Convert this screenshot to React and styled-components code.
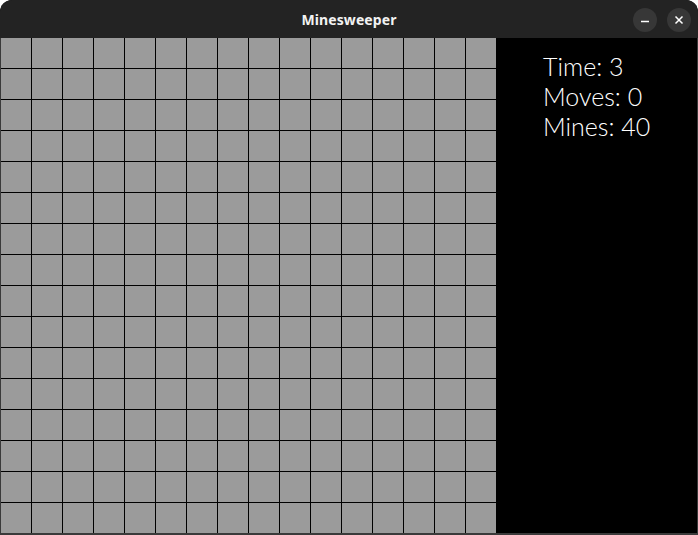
import styled, { createGlobalStyle } from "styled-components";

const GlobalStyle = createGlobalStyle`
  html, body {
    margin: 0;
    padding: 0;
    background: #ffffff;
  }
`;

const ROWS = 16;
const COLS = 16;

export default function App() {
  const cells = Array.from({ length: ROWS * COLS }, (_, i) => i);

  return (
    <>
      <GlobalStyle />
      <Window>
        {/* ---------- TITLE BAR ---------- */}
        <TitleBar>
          <Title>Minesweeper</Title>
          <Controls>
            <CircleButton aria-label="Minimize">
              <svg width="10" height="10" viewBox="0 0 10 10">
                <line x1="1" y1="6.5" x2="9" y2="6.5" stroke="#fff" strokeWidth="1.4" />
              </svg>
            </CircleButton>
            <CircleButton aria-label="Close">
              <svg width="10" height="10" viewBox="0 0 10 10">
                <path d="M1.5 1.5 L8.5 8.5 M8.5 1.5 L1.5 8.5" stroke="#fff" strokeWidth="1.5" />
              </svg>
            </CircleButton>
          </Controls>
        </TitleBar>

        {/* ---------- GAME AREA ---------- */}
        <Body>
          <Board>
            {cells.map((i) => (
              <Cell key={i} />
            ))}
          </Board>

          <Stats>
            <StatLine>Time: 3</StatLine>
            <StatLine>Moves: 0</StatLine>
            <StatLine>Mines: 40</StatLine>
          </Stats>
        </Body>
      </Window>
    </>
  );
}

const Window = styled.div`
  width: 698px;
  height: 535px;
  display: flex;
  flex-direction: column;
  border-radius: 12px 12px 0 0;
  overflow: hidden;
  background: #000;
`;

const TitleBar = styled.div`
  height: 38px;
  flex-shrink: 0;
  position: relative;
  display: flex;
  align-items: center;
  justify-content: center;
  background: #232323;
`;

const Title = styled.span`
  font-family: "Noto Sans", "Open Sans", sans-serif;
  font-weight: 700;
  font-size: 14px;
  color: #f2f2f2;
  letter-spacing: 0.1px;
`;

const Controls = styled.div`
  position: absolute;
  right: 7px;
  top: 8px;
  display: flex;
  gap: 10px;
`;

const CircleButton = styled.div`
  width: 24px;
  height: 24px;
  border-radius: 50%;
  background: #373737;
  display: flex;
  align-items: center;
  justify-content: center;
`;

const Body = styled.div`
  flex: 1;
  display: flex;
  background: #000;
  border-left: 1px solid #3a3a3a;
  border-right: 1px solid #3a3a3a;
  border-bottom: 2px solid #3a3a3a;
`;

const Board = styled.div`
  display: grid;
  grid-template-columns: repeat(${COLS}, 30px);
  grid-template-rows: repeat(${ROWS}, 30px);
  gap: 1px;
  align-self: flex-start;
  background: #000;
`;

const Cell = styled.div`
  background: #9b9b9b;
`;

const Stats = styled.div`
  padding: 13px 0 0 47px;
  display: flex;
  flex-direction: column;
`;

const StatLine = styled.div`
  font-family: "Lato", "Liberation Sans", sans-serif;
  font-weight: 300;
  font-size: 25px;
  line-height: 30px;
  color: #fff;
`;
